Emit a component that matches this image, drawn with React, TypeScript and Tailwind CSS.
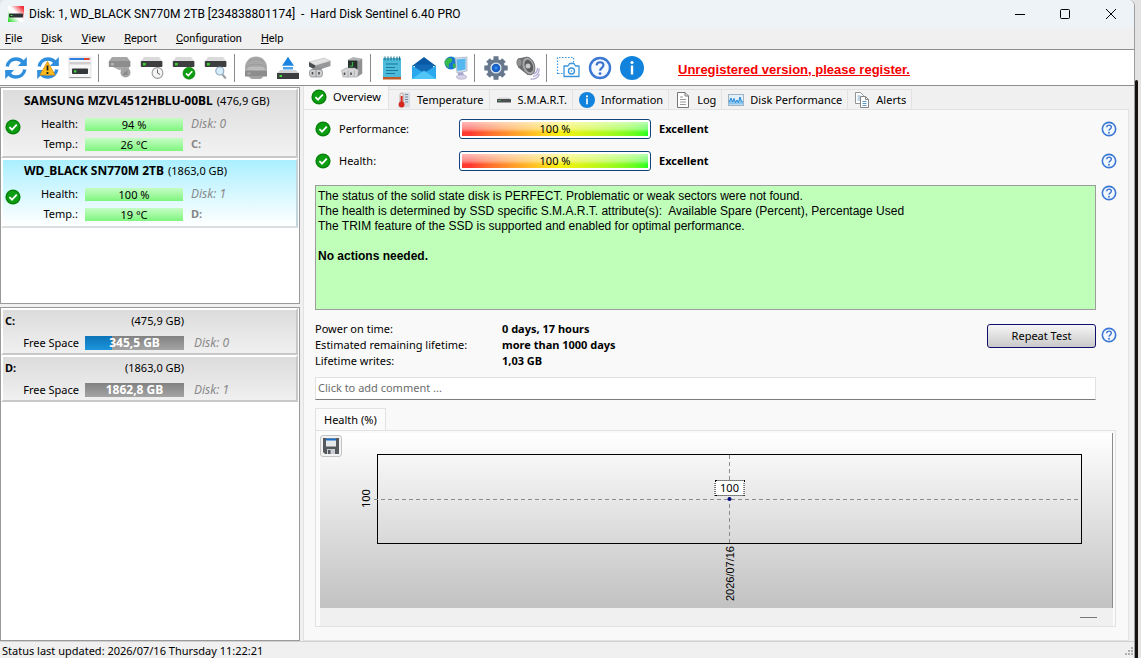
import React, { useId } from "react";

type P = { className?: string };

/* ---------- shared glyphs ---------- */

const Check = ({ className = "size-4" }: P) => (
  <svg viewBox="0 0 16 16" className={className} aria-hidden="true">
    <circle cx="8" cy="8" r="7.6" fill="#0f8a12" />
    <circle cx="8" cy="8" r="6.6" fill="#0c9d10" stroke="#087a0b" strokeWidth="0.8" />
    <path d="M4.4 8.2 7 10.7 11.8 5.6" fill="none" stroke="#fff" strokeWidth="1.8" />
  </svg>
);

const HelpRing = ({ className = "size-4" }: P) => (
  <svg viewBox="0 0 24 24" className={className} aria-hidden="true">
    <circle cx="12" cy="12" r="10" fill="#f4f9ff" stroke="#3a78d4" strokeWidth="2.4" />
    <path d="M8.6 9.4c.1-2 1.5-3.2 3.5-3.2s3.4 1.200 3.4 2.900c0 1.500-.8 2.200-1.900 3-1 .8-1.500 1.300-1.500 2.600" fill="none" stroke="#3a70cc" strokeWidth="2.100" />
    <circle cx="12" cy="17.600" r="1.400" fill="#3a70cc" />
  </svg>
);

const InfoDot = ({ className = "size-4" }: P) => (
  <svg viewBox="0 0 24 24" className={className} aria-hidden="true">
    <circle cx="12" cy="12" r="12" fill="#1183dc" />
    <circle cx="12" cy="6.500" r="1.600" fill="#fff" />
    <rect x="10.800" y="9.500" width="2.400" height="9" fill="#fff" />
  </svg>
);

const Drive = ({ y = 6, gray = false }: { y?: number; gray?: boolean }) => (
  <g>
    <path d={`M4 ${y - 4}h15l3.500 4.500H.8z`} fill={gray ? "#a6a6a6" : "#dadada"} />
    <rect x="0.800" y={y} width="21.600" height="6" rx="0.800" fill={gray ? "#8d8d8d" : "#3c3e40"} />
    <rect x="3" y={y + 2} width="2.800" height="2.400" fill={gray ? "#b5b5b5" : "#38d430"} />
  </g>
);

/* ---------- toolbar drawings, all on a 24-unit grid ---------- */

const RefreshShape = () => (
  <g fill="none" stroke="#2f8fdc" strokeWidth="3.400">
    <path d="M3.200 10.500C4 6 7.500 3 12 3c3 0 5.500 1.200 7.200 3.400" />
    <path d="M20.800 13.500C20 18 16.500 21 12 21c-3 0-5.500-1.200-7.200-3.400" />
    <path d="M22.800 1v9h-9z" fill="#2f8fdc" stroke="none" />
    <path d="M1.200 23v-9h9z" fill="#2f8fdc" stroke="none" />
  </g>
);

const tools: Record<string, React.ReactNode> = {
  refresh: <RefreshShape />,
  refreshWarn: (
    <>
      <RefreshShape />
      <path d="M11.500 5.500 19 19H4z" fill="#ffb91a" stroke="#dd9410" strokeWidth="0.900" strokeLinejoin="round" />
      <path d="M11.500 9.500v5M11.500 16v2" stroke="#222" strokeWidth="1.800" />
    </>
  ),
  panel: (
    <>
      <rect x="1" y="1" width="22" height="21" fill="#f6f6f6" stroke="#d8d8d8" strokeWidth="0.700" />
      <rect x="1.500" y="2" width="20" height="2" fill="#2f7fe0" />
      <rect x="16" y="2" width="5.500" height="2" fill="#e0432f" />
      <rect x="1.500" y="6" width="21" height="2.500" fill="#cfcfcf" />
      <rect x="4" y="12.500" width="16" height="5.500" rx="0.800" fill="#34373a" />
      <rect x="6" y="14.300" width="2.400" height="2.200" fill="#3fdc38" />
      <path d="M1.500 21.500h21" stroke="#9a9a9a" />
    </>
  ),
  driveGray: (
    <>
      <Drive gray y={5} />
      <path d="M5 11h16v3H11z" fill="#adadad" />
      <circle cx="17.500" cy="16.500" r="5" fill="#a3a3a3" />
      <path d="m14.500 18.500 5-4.500v5h-4z" fill="#8a8a8a" />
    </>
  ),
  driveClock: (
    <>
      <Drive y={5} />
      <circle cx="17.500" cy="17" r="5.400" fill="#f4f4f4" stroke="#9b9b9b" strokeWidth="1.100" />
      <path d="M17.500 13.500V17l2.600 1.500" fill="none" stroke="#666" strokeWidth="1" />
    </>
  ),
  driveOk: (
    <>
      <Drive y={5} />
      <circle cx="17" cy="17.200" r="6" fill="#0c9d10" stroke="#087a0b" strokeWidth="0.600" />
      <path d="m14 17.300 2.300 2.300 4-4.400" fill="none" stroke="#fff" strokeWidth="1.700" />
    </>
  ),
  driveSearch: (
    <>
      <Drive y={5} />
      <path d="m18 18 3.800 4.500" stroke="#9aa0a6" strokeWidth="2" />
      <circle cx="15.800" cy="15" r="4" fill="#d6ecfb" stroke="#8fa9bd" strokeWidth="1.200" />
    </>
  ),
  dome: (
    <>
      <circle cx="12" cy="11.500" r="11" fill="#a9a9a9" />
      <path d="M4 6c5-4 11-4 16 0M2 10.500c6-3 14-3 20 0" fill="none" stroke="#9a9a9a" strokeWidth="1" />
      <path d="M5 11h14l3.500 4h-21z" fill="#bcbcbc" />
      <rect x="1" y="14.500" width="22" height="6" fill="#8c8c8c" />
      <rect x="3.500" y="16.500" width="3" height="2" fill="#a8a8a8" />
      <path d="M4 20.500h16l-3.500 2.500h-9z" fill="#a3a3a3" />
    </>
  ),
  eject: (
    <>
      <path d="m12 .8 6 9H6z" fill="#1b86e0" />
      <rect x="7" y="11" width="10" height="2.500" fill="#49a4ec" />
      <path d="M4.500 14h15l3.500 3H1z" fill="#cfd3d6" />
      <rect x="1" y="17" width="22" height="6" fill="#3b3d3f" />
      <rect x="3.500" y="19" width="2.500" height="2" fill="#42dd3a" />
    </>
  ),
  cable: (
    <>
      <path d="m1 6 15-4 6.500 3-15 4.500z" fill="#e2e2e2" stroke="#b2b2b2" strokeWidth="0.500" />
      <path d="M7.500 9.500 22.500 5v5l-15 5z" fill="#96989a" />
      <path d="m1 6 6.500 3.500V14L1 10.500z" fill="#4a4d4f" />
      <path d="m5 12 4-1 5 1-1 3H4z" fill="#8d8f91" />
      <rect x="1.500" y="13.500" width="13" height="7.500" rx="2.500" fill="#cccdce" stroke="#85878a" strokeWidth="0.700" />
      <path d="M8 14v7" stroke="#85878a" strokeWidth="0.700" />
      <path d="M4.500 16v2.500M11 16v2.500" stroke="#4c4e50" strokeWidth="1.600" />
    </>
  ),
  plug: (
    <>
      <path d="m8 4 5-2.500 9 1.500v14.500l-4 2.500-6-2z" fill="#b4b6b8" stroke="#8a8c8d" strokeWidth="0.500" />
      <path d="M18 5.500 22 3v14.500L18 20z" fill="#8f9193" />
      <path d="M8 4.500h9.500v8.500H8z" fill="#26302a" />
      <path d="M12.500 6v4H9.500" stroke="#38b044" strokeWidth="1.200" fill="none" />
      <path d="M1.500 14.500 6 12h9l3.500 2.500-1 6.500H3z" fill="#d6d7d8" stroke="#9a9c9e" strokeWidth="0.600" />
      <path d="M8 14.500v7M14.500 14.500 14 21" stroke="#a0a2a4" strokeWidth="0.700" />
      <path d="M4.500 16.500V19M11 16.500V19" stroke="#4c4e50" strokeWidth="1.600" />
    </>
  ),
  notes: (
    <>
      <rect x="3" y="2" width="18" height="19" fill="#4dbbdc" />
      <rect x="3" y="21" width="18" height="2.500" fill="#bf5a24" />
      <path d="M5 .5v4M8 .5v4M11 .5v4M14 .5v4M17 .5v4M19.500 .5v4" stroke="#276f88" strokeWidth="1.100" />
      <path d="M6 8h12M6 11.500h9M6 14.500h12M6 17.500h9" stroke="#1d7799" strokeWidth="1.200" />
    </>
  ),
  mail: (
    <>
      <path d="M0 10 12 1l12 9z" fill="#0a58a4" />
      <path d="M3 8.500h18V17H3z" fill="#1168b4" />
      <path d="M0 9.500 12 17l12-7.500V23H0z" fill="#29a9ec" />
      <path d="M0 23 12 14.500 24 23z" fill="#4fc5f8" />
    </>
  ),
  network: (
    <>
      <circle cx="7" cy="7" r="6.500" fill="#1877d0" />
      <path d="M3 3c3-3 6 0 5 2s-4 2-3 5-3 1-4-2 0-4 2-5zM9 8c2-1 3 0 3 2s-3 3-3 1z" fill="#37b94b" />
      <path d="m11 2 12-1v14l-10 2z" fill="#d7dfe9" stroke="#93a2b8" strokeWidth="0.600" />
      <path d="m12.500 3.500 9-1v11l-8 1.500z" fill="#54b7ef" />
      <path d="m14 17 5-1 1 4h-6z" fill="#a9a5cf" />
      <ellipse cx="17.500" cy="21" rx="5" ry="2.200" fill="#d5d3e8" stroke="#a39fc2" strokeWidth="0.600" />
    </>
  ),
  gear: (
    <>
      <g stroke="#66788c" strokeWidth="5">
        <path d="M12 .3v23.400M.3 12h23.400M4 4l16 16M20 4 4 20" />
      </g>
      <circle cx="12" cy="12" r="9" fill="#66788c" />
      <circle cx="12" cy="12" r="5.600" fill="#dfe8f2" />
      <circle cx="12" cy="12" r="4.300" fill="#1a5fc4" />
      <circle cx="12" cy="12" r="1.800" fill="#2a86f0" />
    </>
  ),
  speaker: (
    <>
      <path d="M17.500 18c3-1 4-3 4-6M17 20.500c4-.5 6.500-4 6-8M14.500 23c4 .5 7.500-1.500 9-5" fill="none" stroke="#b3add6" strokeWidth="1.400" />
      <path d="M2 2.500 11 .8l6 17-5 1.500-10-8z" fill="#6b6d6f" />
      <ellipse cx="12.500" cy="10" rx="6" ry="9" transform="rotate(-20 12.500 10)" fill="#a6a8aa" stroke="#707274" />
      <ellipse cx="12.800" cy="10" rx="4" ry="6.500" transform="rotate(-20 12.800 10)" fill="#5a5c5e" />
      <circle cx="12" cy="10" r="2.500" fill="#c8c9ca" />
      <ellipse cx="3.300" cy="6.500" rx="2.500" ry="4" fill="#8e9092" stroke="#6a6c6e" strokeWidth="0.600" />
    </>
  ),
  capture: (
    <>
      <path d="M1.500 18V1.500H18" fill="none" stroke="#3a94dc" strokeWidth="1.200" strokeDasharray="1.500 1.500" />
      <path d="M17.500 2v5M2 17.500h5" stroke="#3a94dc" strokeWidth="1.200" strokeDasharray="1.500 1.500" />
      <path d="M8 10h4l1.500-2.500h4.500L19.500 10H23v10.500H8z" fill="#fff" stroke="#3a94dc" strokeWidth="1.300" strokeLinejoin="round" />
      <circle cx="15.500" cy="15" r="3" fill="none" stroke="#3a94dc" strokeWidth="1.400" />
      <circle cx="15.500" cy="15" r="0.800" fill="#3a94dc" />
    </>
  ),
};

const toolbar = [
  ["refresh", "refreshWarn", "panel"],
  ["driveGray", "driveClock", "driveOk", "driveSearch"],
  ["dome", "eject", "cable", "plug"],
  ["notes", "mail", "network"],
  ["gear", "speaker"],
  ["capture", "help", "info"],
];

const ToolIcon = ({ name }: { name: string }) => {
  if (name === "help") return <HelpRing className="size-6" />;
  if (name === "info") return <InfoDot className="size-6" />;
  return (
    <svg viewBox="0 0 24 24" className="size-6" aria-hidden="true">
      {tools[name]}
    </svg>
  );
};

/* ---------- tab icons ---------- */

const Thermometer = () => (
  <svg viewBox="0 0 16 16" className="size-4" aria-hidden="true">
    <path d="M7 .5h8v15H2.500z" fill="#d7dce2" />
    <path d="M10 2.500h3M10 5h3M10 7.500h3M10 10h3" stroke="#6f8ca8" strokeWidth="1" />
    <rect x="5" y="1" width="3.200" height="10" rx="1.600" fill="#e9e9e9" stroke="#a66" strokeWidth="0.500" />
    <rect x="5.700" y="4" width="1.900" height="8" fill="#d4261c" />
    <circle cx="6.600" cy="12.500" r="2.900" fill="#d4261c" />
  </svg>
);

const Bar = () => (
  <svg viewBox="0 0 16 16" className="size-4" aria-hidden="true">
    <path d="M3 5.500h10l2 1.500H1z" fill="#d5d5d5" />
    <rect x="1" y="7" width="14" height="3.500" rx="0.500" fill="#4c4f51" />
    <rect x="2.500" y="8" width="2" height="1" fill="#57b957" />
  </svg>
);

const Page = () => (
  <svg viewBox="0 0 16 16" className="size-4" aria-hidden="true">
    <path d="M2.500.5h7.500l3.500 3.500v11.500h-11z" fill="#fff" stroke="#777" />
    <path d="M10 .5V4h3.500" fill="none" stroke="#777" />
    <path d="M5 5h3M5 7.500h6M5 10h6M5 12.500h6" stroke="#9a9a9a" />
  </svg>
);

const Graph = () => (
  <svg viewBox="0 0 16 16" className="size-4" aria-hidden="true">
    <rect x="0.500" y="2.500" width="15" height="11" fill="#e2eff9" stroke="#9fb4c4" />
    <path d="M1 12.500V10l2-4 1.500 4L6 6.500l1.500 4L9 8l1.500 2.500L12 5l1.500 4.500 1.500.5v2.500z" fill="#8ac6f0" />
    <path d="M1 10l2-4 1.500 4L6 6.500l1.500 4L9 8l1.500 2.500L12 5l1.500 4.500 1.500.5" fill="none" stroke="#2387d6" strokeWidth="1" />
  </svg>
);

const Pages = () => (
  <svg viewBox="0 0 16 16" className="size-4" aria-hidden="true">
    <path d="M1.500.5h5l3 3v8h-8z" fill="#fff" stroke="#888" strokeWidth="0.900" />
    <path d="M3.500 4h3M3.500 6h3M3.500 8h3" stroke="#7aa7cf" />
    <path d="M6.500 4.500h5l3 3v8h-8z" fill="#fff" stroke="#777" strokeWidth="0.900" />
    <path d="M11.500 4.500v3h3" fill="none" stroke="#777" strokeWidth="0.900" />
    <path d="M8.500 9.500h4M8.500 11.500h4M8.500 13.500h4" stroke="#5f97cd" />
  </svg>
);

const tabs: [string, React.ReactNode][] = [
  ["Temperature", <Thermometer />],
  ["S.M.A.R.T.", <Bar />],
  ["Information", <InfoDot />],
  ["Log", <Page />],
  ["Disk Performance", <Graph />],
  ["Alerts", <Pages />],
];

/* ---------- left column ---------- */

type Disk = { name: string; size: string; health: string; temp: string; disk: string; letter: string; active?: boolean };

const disks: Disk[] = [
  { name: "SAMSUNG MZVL4512HBLU-00BL", size: "(476,9 GB)", health: "94 %", temp: "26 °C", disk: "Disk: 0", letter: "C:" },
  { name: "WD_BLACK SN770M 2TB", size: "(1863,0 GB)", health: "100 %", temp: "19 °C", disk: "Disk: 1", letter: "D:", active: true },
];

const GreenBar = ({ children }: { children: React.ReactNode }) => (
  <span className="ml-[6px] h-[13px] w-[98px] bg-linear-to-b from-[#c4fdc4] to-[#7df57d] text-center leading-[13px]">{children}</span>
);

const DiskItem = ({ d }: { d: Disk }) => (
  <button
    type="button"
    className={
      "flex h-[70px] w-full flex-col border-2 border-t-white border-l-white pt-[3px] text-left " +
      (d.active
        ? "border-r-[#c3d5da] border-b-[#d9dfe0] bg-linear-to-b from-[#a9efff] to-white"
        : "border-r-[#c8c8c8] border-b-[#c8c8c8] bg-linear-to-b from-[#dcdcdc] to-[#f2f2f2]")
    }
  >
    <span className="flex h-4 items-center gap-1 pl-[21px] whitespace-nowrap">
      <b className="text-[12px]">{d.name}</b>
      <span>{d.size}</span>
    </span>
    <span className="flex items-center pt-[5px]">
      <Check className="mb-[14px] ml-[2px] size-4 shrink-0" />
      <span className="flex flex-col">
        <span className="flex h-5 items-center">
          <span className="w-[58px] pr-[1px] text-right">Health:</span>
          <GreenBar>{d.health}</GreenBar>
          <i className="ml-2 text-[12px] text-[#8a8a8a]">{d.disk}</i>
        </span>
        <span className="flex h-5 items-center">
          <span className="w-[58px] pr-[1px] text-right">Temp.:</span>
          <GreenBar>{d.temp}</GreenBar>
          <b className="ml-2 text-[#858585]">{d.letter}</b>
        </span>
      </span>
    </span>
  </button>
);

const volumes = [
  { letter: "C:", size: "(475,9 GB)", free: "345,5 GB", disk: "Disk: 0", used: 27 },
  { letter: "D:", size: "(1863,0 GB)", free: "1862,8 GB", disk: "Disk: 1", used: 0 },
];

const Volume = ({ v }: { v: (typeof volumes)[number] }) => (
  <button
    type="button"
    className="flex h-[47px] w-full flex-col border-2 border-t-white border-r-[#c8c8c8] border-b-[#c8c8c8] border-l-white bg-linear-to-b from-[#dcdcdc] to-[#f0f0f0] pt-[3px] text-left"
  >
    <span className="flex h-4 w-[181px] items-center justify-between pl-[2px]">
      <b>{v.letter}</b>
      <span>{v.size}</span>
    </span>
    <span className="flex items-center pt-[6px]">
      <span className="w-[76px] text-right">Free Space</span>
      <span className="relative ml-[6px] h-[14px] w-[99px] bg-linear-to-b from-[#828282] to-[#a4a4a4] text-center text-[12px] leading-[14px] font-bold text-white">
        <span
          className="absolute inset-y-0 left-0 bg-linear-to-b from-[#0d74b8] to-[#1c95dd]"
          style={{ width: v.used + "%" }}
        />
        <span className="relative">{v.free}</span>
      </span>
      <i className="ml-[10px] text-[12px] text-[#8a8a8a]">{v.disk}</i>
    </span>
  </button>
);

/* ---------- right column ---------- */

const HelpButton = ({ className = "" }: P) => (
  <button type="button" aria-label="Help" className={"size-4 shrink-0 " + className}>
    <HelpRing />
  </button>
);

const Meter = ({ label }: { label: string }) => {
  const id = useId();
  return (
    <div className="flex h-8 items-center">
      <Check className="size-4 shrink-0" />
      <span id={id} className="ml-2 w-[120px]">{label}</span>
      <div
        role="meter"
        aria-labelledby={id}
        aria-valuenow={100}
        aria-valuemin={0}
        aria-valuemax={100}
        className="h-5 w-[192px] rounded-[3px] border border-[#17437c] bg-white p-[2px]"
      >
        <div className="h-full bg-linear-to-r from-[#ff3b30] from-5% via-[#f8f010] via-53% to-[#22ff22]">
          <div className="flex h-full items-center justify-center bg-linear-to-b from-white/65 via-white/40 via-50% to-transparent to-75%">
            100 %
          </div>
        </div>
      </div>
      <b className="ml-2">Excellent</b>
      <HelpButton className="ml-auto" />
    </div>
  );
};

const facts = [
  ["Power on time:", "0 days, 17 hours"],
  ["Estimated remaining lifetime:", "more than 1000 days"],
  ["Lifetime writes:", "1,03 GB"],
];

const Chart = () => (
  <div className="flex min-h-[174px] flex-1 border-r border-[#8c8c8c] bg-linear-to-b from-white to-[#c2c2c2]">
    <div className="flex w-[57px] shrink-0 justify-between pt-[2px] pb-[65px]">
      <button
        type="button"
        aria-label="Save chart"
        className="flex size-[22px] items-center justify-center rounded-[3px] border border-[#c4c4c4] bg-[#f2f2f2]"
      >
        <svg viewBox="0 0 16 16" className="size-4" aria-hidden="true">
          <path d="M0 0h16v16H2L0 14z" fill="#55595d" />
          <rect x="3" y="0.500" width="10" height="8" fill="#e6e9ec" />
          <rect x="3" y="0.500" width="10" height="2" fill="#1c6fc4" />
          <rect x="4" y="11" width="8" height="5" fill="#c9ccd0" />
          <rect x="5" y="12" width="2.500" height="4" fill="#55595d" />
        </svg>
      </button>
      <span className="mt-[19px] mr-[3px] rotate-180 self-stretch text-center leading-4 [writing-mode:vertical-rl]">100</span>
    </div>
    <div className="flex flex-1 flex-col pt-[21px] pr-[30px]">
      <div className="relative flex-1 border border-black">
        <svg className="absolute inset-0 size-full overflow-visible" aria-hidden="true">
          <line x1="-4" y1="50%" x2="100%" y2="50%" stroke="#8c8c8c" strokeDasharray="4 3" shapeRendering="crispEdges" />
          <line x1="50%" y1="0" x2="50%" y2="100%" stroke="#8c8c8c" strokeDasharray="4 3" shapeRendering="crispEdges" />
          <circle cx="50%" cy="50%" r="2" fill="#000a80" />
        </svg>
        <span className="absolute bottom-1/2 left-1/2 mb-[3px] -translate-x-1/2 border border-dotted border-black bg-white px-[5px] leading-[14px]">
          100
        </span>
      </div>
      <div className="flex h-16 justify-center pt-[2px] font-['Liberation_Sans',sans-serif]">
        <span className="rotate-180 self-start leading-4 [writing-mode:vertical-rl]">2026/07/16</span>
      </div>
    </div>
  </div>
);

/* ---------- window ---------- */

const menu = ["File", "Disk", "View", "Report", "Configuration", "Help"];

export default function App() {
  return (
    <div className="flex min-h-screen bg-[#e3e3e3] font-['Noto_Sans','Open_Sans',sans-serif] text-[11px] leading-4 text-black">
      <div className="flex min-w-0 flex-1 flex-col overflow-hidden rounded-t-[6px] border-r border-[#9d9d9d] bg-[#f0f0f0]">
        <header className="flex h-7 items-center bg-[#edf3f7] pl-2">
          <svg viewBox="0 0 16 16" className="size-4" aria-hidden="true">
            <defs>
              <linearGradient id="logo" x1="1" y1="0" x2="0" y2="1">
                <stop offset="0.100" stopColor="#f0303a" />
                <stop offset="0.450" stopColor="#fff" />
                <stop offset="0.600" stopColor="#fff" />
                <stop offset="1" stopColor="#18d818" />
              </linearGradient>
            </defs>
            <rect width="16" height="16" fill="url(#logo)" />
            <rect x="1" y="7.500" width="14" height="4" rx="1" fill="#2d3236" />
            <rect x="2.500" y="9" width="2" height="1" fill="#4fe04f" />
          </svg>
          <h1 className="ml-[5px] font-['Roboto',sans-serif] text-[12px] whitespace-pre">
            {"Disk: 1, WD_BLACK SN770M 2TB [234838801174]  -  Hard Disk Sentinel 6.40 PRO"}
          </h1>
          <div className="ml-auto flex">
            <button type="button" aria-label="Minimize" className="flex h-7 w-[45px] items-center justify-center">
              <svg viewBox="0 0 12 12" className="size-3"><path d="M1 6.500h10" stroke="#000" /></svg>
            </button>
            <button type="button" aria-label="Maximize" className="flex h-7 w-[45px] items-center justify-center">
              <svg viewBox="0 0 12 12" className="size-3"><rect x="1.500" y="1.500" width="9" height="9" rx="1" fill="none" stroke="#000" /></svg>
            </button>
            <button type="button" aria-label="Close" className="flex h-7 w-[47px] items-center justify-center">
              <svg viewBox="0 0 12 12" className="size-3"><path d="m1 1 10 10M11 1 1 11" stroke="#000" /></svg>
            </button>
          </div>
        </header>

        <nav className="flex h-[21px] items-center gap-[19px] pl-[5px] font-['Roboto',sans-serif]">
          {menu.map((m) => (
            <button type="button" key={m}>
              <u>{m[0]}</u>
              {m.slice(1)}
            </button>
          ))}
        </nav>

        <div role="toolbar" aria-label="Tools" className="flex h-[37px] items-center border-y border-[#8e8e8e] bg-white">
          {toolbar.map((group, i) => (
            <div key={i} className="flex items-center">
              {i > 0 && <span className="mr-[5px] ml-[2px] h-7 w-px bg-[#8a8a8a]" />}
              {group.map((name) => (
                <button type="button" key={name} aria-label={name} className="flex w-8 justify-center">
                  <ToolIcon name={name} />
                </button>
              ))}
            </div>
          ))}
          <a href="#register" className="mt-1 ml-[30px] font-['Liberation_Sans',sans-serif] text-[13px] font-bold text-[#f40000] underline">
            Unregistered version, please register.
          </a>
        </div>

        <main className="flex flex-1">
          <aside className="flex w-[300px] shrink-0 flex-col gap-[3px] pt-[1px]">
            <div className="h-[217px] border border-[#9a9a9a] bg-white pr-px">
              {disks.map((d) => <DiskItem key={d.name} d={d} />)}
            </div>
            <div className="flex-1 border border-[#9a9a9a] bg-white pr-px">
              {volumes.map((v) => <Volume key={v.letter} v={v} />)}
            </div>
          </aside>

          <section className="ml-[3px] flex min-w-0 flex-1 flex-col pr-[5px]">
            <div role="tablist" className="flex h-[23px] items-end">
              <button type="button" role="tab" aria-selected="true" className="flex h-[23px] items-center gap-[6px] border-r border-l border-[#e2e2e2] bg-[#f9f9f9] px-[7px] pb-[2px]">
                <Check /> Overview
              </button>
              {tabs.map(([name, icon]) => (
                <button type="button" role="tab" aria-selected="false" key={name} className="flex h-5 items-center gap-[6px] border-t border-r border-[#e2e2e2] bg-[#f2f2f2] pr-[5px] pl-[6px]">
                  {icon} {name}
                </button>
              ))}
            </div>

            <div className="flex flex-1 flex-col border border-[#e2e2e2] bg-[#f9f9f9] pt-[3px] pr-[11px] pb-[13px] pl-[11px]">
              <Meter label="Performance:" />
              <Meter label="Health:" />

              <div className="mt-2 flex items-start gap-[5px]">
                <div className="h-[125px] flex-1 border border-[#9c9c9c] bg-[#bfffba] px-[2px] pt-[3px] font-['Liberation_Sans',sans-serif] text-[12px] leading-[15px]">
                  <p>The status of the solid state disk is PERFECT. Problematic or weak sectors were not found.</p>
                  <p className="whitespace-pre-wrap">{"The health is determined by SSD specific S.M.A.R.T. attribute(s):  Available Spare (Percent), Percentage Used"}</p>
                  <p>The TRIM feature of the SSD is supported and enabled for optimal performance.</p>
                  <p className="mt-[15px] font-bold">No actions needed.</p>
                </div>
                <HelpButton />
              </div>

              <div className="mt-[11px] flex items-start">
                <dl className="grid grid-cols-[187px_auto]">
                  {facts.map(([k, v]) => (
                    <React.Fragment key={k}>
                      <dt>{k}</dt>
                      <dd className="font-bold">{v}</dd>
                    </React.Fragment>
                  ))}
                </dl>
                <button type="button" className="mt-[3px] ml-auto h-6 w-[109px] rounded-[3px] border border-[#10106c] bg-linear-to-b from-[#f6f6f6] to-[#c9c9c9]">
                  Repeat Test
                </button>
                <HelpButton className="mt-[6px] ml-[5px]" />
              </div>

              <input
                type="text"
                aria-label="Comment"
                placeholder="Click to add comment ..."
                className="mt-2 mr-[21px] h-[23px] border border-[#e2e2e2] border-b-[#7c7c7c] bg-white px-[2px] pb-[2px] placeholder:text-[#6c6c6c]"
              />

              <div role="tablist" className="mt-2 flex">
                <button type="button" role="tab" aria-selected="true" className="h-[22px] border border-b-0 border-[#e2e2e2] bg-[#fbfbfb] px-2">
                  Health (%)
                </button>
              </div>
              <div className="mr-px flex flex-1 flex-col border border-[#e2e2e2] bg-[#fbfbfb] pt-[2px] pr-[2px] pl-1">
                <Chart />
                <div className="flex h-[18px] items-center justify-end bg-[#f0f0f0] pr-4">
                  <span className="h-px w-[17px] bg-[#777]" />
                </div>
              </div>
            </div>
          </section>
        </main>

        <footer className="flex h-[17px] items-center justify-between border-t border-[#d0d0d0] pt-[2px] pl-[2px]">
          <span className="leading-[14px]">Status last updated: 2026/07/16 Thursday 11:22:21</span>
          <svg viewBox="0 0 10 10" className="size-[10px]" aria-hidden="true">
            <path d="M7 1h2v2H7zM4 4h2v2H4zM7 4h2v2H7zM1 7h2v2H1zM4 7h2v2H4zM7 7h2v2H7z" fill="#b0b0b0" />
          </svg>
        </footer>
      </div>
      <div className="flex w-[6px] pt-20">
        <div className="w-[3px] rounded-t-[3px] bg-[#161210]" />
      </div>
    </div>
  );
}
